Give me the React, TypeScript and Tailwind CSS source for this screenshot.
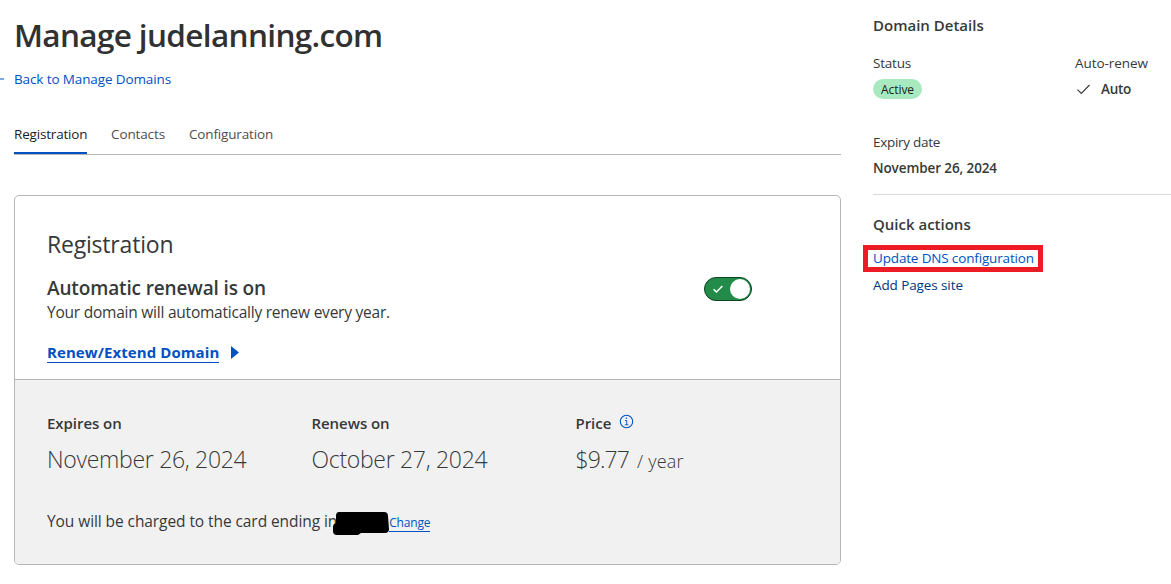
import type { ReactNode } from "react";

function Tab({ children, className = "" }: { children: ReactNode; className?: string }) {
  return (
    <a href="#" className={`block h-[30px] text-[13.5px] leading-5 text-[#4e4e4e] ${className}`}>
      {children}
    </a>
  );
}

function Field({ label, children, className = "" }: { label: ReactNode; children: ReactNode; className?: string }) {
  return (
    <div className={className}>
      <div className="flex h-6 items-center text-[15px] font-semibold leading-6 tracking-[-0.05px]">{label}</div>
      <div className="mt-2 h-8 text-[23px] font-light leading-8 tracking-[-0.3px]">{children}</div>
    </div>
  );
}

function InfoIcon() {
  return (
    <svg className="mb-1 ml-2 size-[15px]" viewBox="0 0 15 15" fill="none" stroke="#0051c3">
      <circle cx="7.5" cy="7.5" r="6.2" strokeWidth="1.1" />
      <path d="M6 6.5h1.7v4.2M5.8 10.8h3.6" strokeWidth="0.9" />
      <circle cx="7.4" cy="4.3" r="0.75" fill="#0051c3" stroke="none" />
    </svg>
  );
}

function Toggle() {
  return (
    <button
      role="switch"
      aria-checked="true"
      aria-label="Automatic renewal"
      className="flex h-6 w-12 items-center justify-between rounded-full border border-[#0f4221] bg-[#228b49] pl-[8px] pr-[1px]"
    >
      <svg className="h-[8px] w-[10px]" viewBox="0 0 10 8" fill="none" stroke="white" strokeWidth="1.5">
        <path d="M0.6 4.2 3.4 7 9.4 1" />
      </svg>
      <span className="size-5 rounded-full bg-white" />
    </button>
  );
}

function RegistrationCard() {
  return (
    <section className="mt-10 h-[370px] overflow-hidden rounded-[5px] border border-[#b6b6b6]">
      <div className="h-[184px] border-b border-[#b6b6b6] px-8 pt-8">
        <h2 className="h-8 text-[23px] leading-8 tracking-[-0.2px]">Registration</h2>
        <div className="mt-[14px] flex justify-between pr-14">
          <div>
            <h3 className="h-[26px] text-[19px] font-semibold leading-7 tracking-[-0.14px]">Automatic renewal is on</h3>
            <p className="h-6 text-[15.5px] leading-6 tracking-[-0.23px]">Your domain will automatically renew every year.</p>
          </div>
          <div className="pt-[3px]">
            <Toggle />
          </div>
        </div>
        <div className="mt-[18px] flex items-start">
          <a href="#" className="block h-[21px] border-b border-[#0051c3] text-[15px] font-bold leading-[21px] tracking-[0.08px] text-[#0051c3]">
            Renew/Extend Domain
          </a>
          <svg className="ml-3 mt-1 h-[13px] w-2" viewBox="0 0 8 13" fill="#0051c3">
            <path d="M0 0 8 6.5 0 13Z" />
          </svg>
        </div>
      </div>
      <div className="h-[184px] bg-[#f1f1f1] px-8 pt-[31px]">
        <div className="flex">
          <Field className="w-[264.5px]" label="Expires on">November 26, 2024</Field>
          <Field className="w-[264px]" label="Renews on">October 27, 2024</Field>
          <Field label={<>Price<InfoIcon /></>}>
            <span className="tracking-[-0.9px]">$9.77</span>
            <span className="ml-2 text-[18px] tracking-[0.2px]">/ year</span>
          </Field>
        </div>
        <div className="mt-[34px] flex h-6 items-center text-[15.5px] leading-6 tracking-[-0.08px]">
          <span>You will be charged to the card ending in</span>
          <svg className="relative -ml-[5px] -mr-[1px] top-[2px] h-6 w-[58px] shrink-0" viewBox="0 0 58 24" role="img" aria-label="Card number hidden">
            <path d="M7 1h45q4 0 4 4l1 13q0 4-4 4H29l-3 2H5q-4 0-4-4v-4q0-3 3-4V5q0-4 3-4Z" fill="#000" />
          </svg>
          <a href="#" className="mt-[4px] block h-[18px] border-b border-[#0051c3] text-[12px] leading-[18px] tracking-[-0.2px] text-[#0051c3]">
            Change
          </a>
        </div>
      </div>
    </section>
  );
}

function DomainDetails() {
  return (
    <aside className="w-[298px] shrink-0 pt-[15px] text-[13.5px] leading-5">
      <h2 className="h-5 text-[15px] font-semibold">Domain Details</h2>
      <div className="mt-[18px] flex">
        <div className="w-[202px]">
          <div className="tracking-[-0.2px]">Status</div>
          <span className="mt-[6px] flex h-5 w-[49px] items-center justify-center rounded-full bg-[#a8e9c0] pt-px text-[12px] tracking-[-0.07px] text-[#1d1d1d]">
            Active
          </span>
        </div>
        <div>
          <div className="tracking-[-0.05px]">Auto-renew</div>
          <div className="mt-[6px] flex items-center pl-[2px] font-semibold tracking-[-0.26px]">
            <svg className="mr-[11px] h-[11px] w-[13px]" viewBox="0 0 13 11" fill="none" stroke="#36393a" strokeWidth="1.1">
              <path d="M0.5 5.7 4.3 9.5 12.5 1" />
            </svg>
            Auto
          </div>
        </div>
      </div>
      <div className="mt-[33px] tracking-[-0.29px]">Expiry date</div>
      <div className="mt-[6px] font-semibold tracking-[-0.1px]">November 26, 2024</div>
      <hr className="mt-4 border-[#d9d9d9]" />
      <h2 className="mt-[19px] h-5 text-[15px] font-semibold">Quick actions</h2>
      <a href="#" className="-ml-[10px] mt-[11px] block h-[27px] w-[180px] border-[5px] border-[#ed1c24] pl-[5px] leading-[16px] tracking-[-0.16px] text-[#0051c3]">
        Update DNS configuration
      </a>
      <a href="#" className="mt-[3px] block tracking-[-0.1px] text-[#003681]">Add Pages site</a>
    </aside>
  );
}

export default function App() {
  return (
    <div className="flex h-[584px] w-[1171px] gap-8 overflow-hidden bg-white font-['Open_Sans','Noto_Sans',sans-serif] text-[#36393a]">
      <main className="w-[841px] shrink-0 pl-[14px] pt-[13px]">
        <h1 className="h-10 whitespace-nowrap text-[31.5px] font-semibold leading-[44px] tracking-[-0.65px] text-[#313131]">
          Manage judelanning.com
        </h1>
        <div className="-ml-[14px] mt-4 flex h-5 items-center">
          <span className="mr-[10px] h-[2px] w-1 bg-[#80a8e1]" />
          <a href="#" className="text-[13.5px] leading-5 tracking-[-0.12px] text-[#0051c3]">Back to Manage Domains</a>
        </div>
        <nav className="mt-[35px] flex h-[31px] gap-6 border-b border-[#b6b6b6]">
          <Tab className="w-[73px] border-b-2 border-[#0051c3] tracking-[-0.18px] text-[#1d1d1d]!">Registration</Tab>
          <Tab className="w-[54px] tracking-[-0.12px]">Contacts</Tab>
          <Tab className="w-[84px] tracking-[-0.16px]">Configuration</Tab>
        </nav>
        <RegistrationCard />
      </main>
      <DomainDetails />
    </div>
  );
}
